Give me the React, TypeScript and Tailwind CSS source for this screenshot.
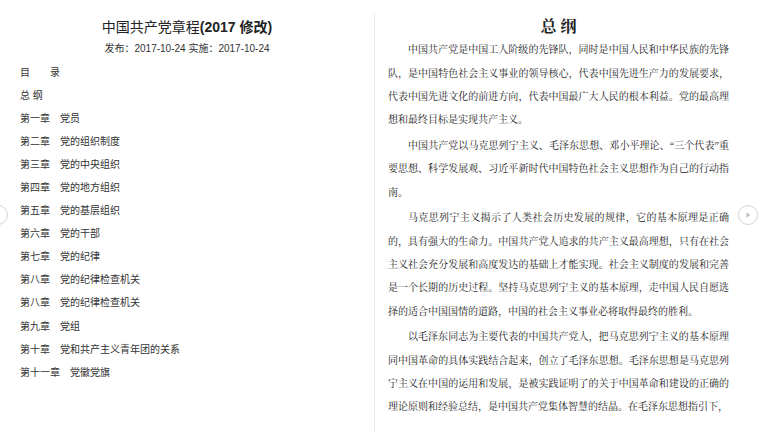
import React from "react";

const toc = [
  "目　　录",
  "总 纲",
  "第一章　党员",
  "第二章　党的组织制度",
  "第三章　党的中央组织",
  "第四章　党的地方组织",
  "第五章　党的基层组织",
  "第六章　党的干部",
  "第七章　党的纪律",
  "第八章　党的纪律检查机关",
  "第八章　党的纪律检查机关",
  "第九章　党组",
  "第十章　党和共产主义青年团的关系",
  "第十一章　党徽党旗",
];

const paras: string[][] = [
  [
    "中国共产党是中国工人阶级的先锋队，同时是中国人民和中华民族的先锋",
    "队，是中国特色社会主义事业的领导核心，代表中国先进生产力的发展要求，",
    "代表中国先进文化的前进方向，代表中国最广大人民的根本利益。党的最高理",
    "想和最终目标是实现共产主义。",
  ],
  [
    "中国共产党以马克思列宁主义、毛泽东思想、邓小平理论、\u201c三个代表\u201d重",
    "要思想、科学发展观、习近平新时代中国特色社会主义思想作为自己的行动指",
    "南。",
  ],
  [
    "马克思列宁主义揭示了人类社会历史发展的规律，它的基本原理是正确",
    "的，具有强大的生命力。中国共产党人追求的共产主义最高理想，只有在社会",
    "主义社会充分发展和高度发达的基础上才能实现。社会主义制度的发展和完善",
    "是一个长期的历史过程。坚持马克思列宁主义的基本原理，走中国人民自愿选",
    "择的适合中国国情的道路，中国的社会主义事业必将取得最终的胜利。",
  ],
  [
    "以毛泽东同志为主要代表的中国共产党人，把马克思列宁主义的基本原理",
    "同中国革命的具体实践结合起来，创立了毛泽东思想。毛泽东思想是马克思列",
    "宁主义在中国的运用和发展，是被实践证明了的关于中国革命和建设的正确的",
    "理论原则和经验总结，是中国共产党集体智慧的结晶。在毛泽东思想指引下，",
  ],
];

function Arrow({ dir }: { dir: "left" | "right" }) {
  return (
    <div className="w-5 h-5 rounded-full border border-[#d4d4d4] bg-white flex items-center justify-center">
      <svg width="8" height="8" viewBox="0 0 8 8">
        {dir === "right" ? (
          <path d="M2.5 1.3 L6.2 4 L2.5 6.7 Z" fill="#c0c0c0" />
        ) : (
          <path d="M5.5 1.3 L1.8 4 L5.5 6.7 Z" fill="#c0c0c0" />
        )}
      </svg>
    </div>
  );
}

export default function App() {
  return (
    <div className="relative w-[759px] h-[432px] overflow-hidden bg-white flex">
      {/* Left page */}
      <div className="w-[374px] shrink-0 flex flex-col font-['Liberation_Sans','Noto_Sans_CJK_SC',sans-serif] text-[#333]">
        <h1 className="mt-[18px] text-center text-[14px] leading-[18px] text-[#222]">
          中国共产党章程<span className="font-bold">(2017 修改)</span>
        </h1>
        <p className="mt-[7px] text-center text-[10px] leading-[12px] text-[#333]">
          发布：2017-10-24 实施：2017-10-24
        </p>
        <ul className="mt-[5.5px] pl-5 text-[10px]">
          {toc.map((t, i) => (
            <li key={i} className="leading-[23.1px] whitespace-pre">
              {t}
            </li>
          ))}
        </ul>
      </div>

      {/* Right page */}
      <div className="mt-[13px] flex-1 border-l border-[#ececec] font-['Liberation_Serif','Noto_Serif_CJK_SC','Noto_Sans_CJK_SC',serif] text-[#222]">
        <div className="w-[354px] pl-[13px]">
          <h2 className="pt-1 text-center text-[16px] leading-[20px] font-bold">总 纲</h2>
          <div className="mt-[1.3px] text-[10px] leading-[23.3px]">
            {paras.map((p, pi) => (
              <div key={pi} className={pi > 0 ? "mt-[2.5px]" : ""}>
                {p.map((line, li) => (
                  <div
                    key={li}
                    className={
                      (li === 0 ? "pl-[20px] " : "") +
                      (li < p.length - 1 ? "[text-align-last:justify] text-justify" : "")
                    }
                  >
                    {line}
                  </div>
                ))}
              </div>
            ))}
          </div>
        </div>
      </div>

      <div className="absolute left-[-12px] top-[205px]">
        <Arrow dir="left" />
      </div>
      <div className="absolute left-[738px] top-[205px]">
        <Arrow dir="right" />
      </div>
    </div>
  );
}
